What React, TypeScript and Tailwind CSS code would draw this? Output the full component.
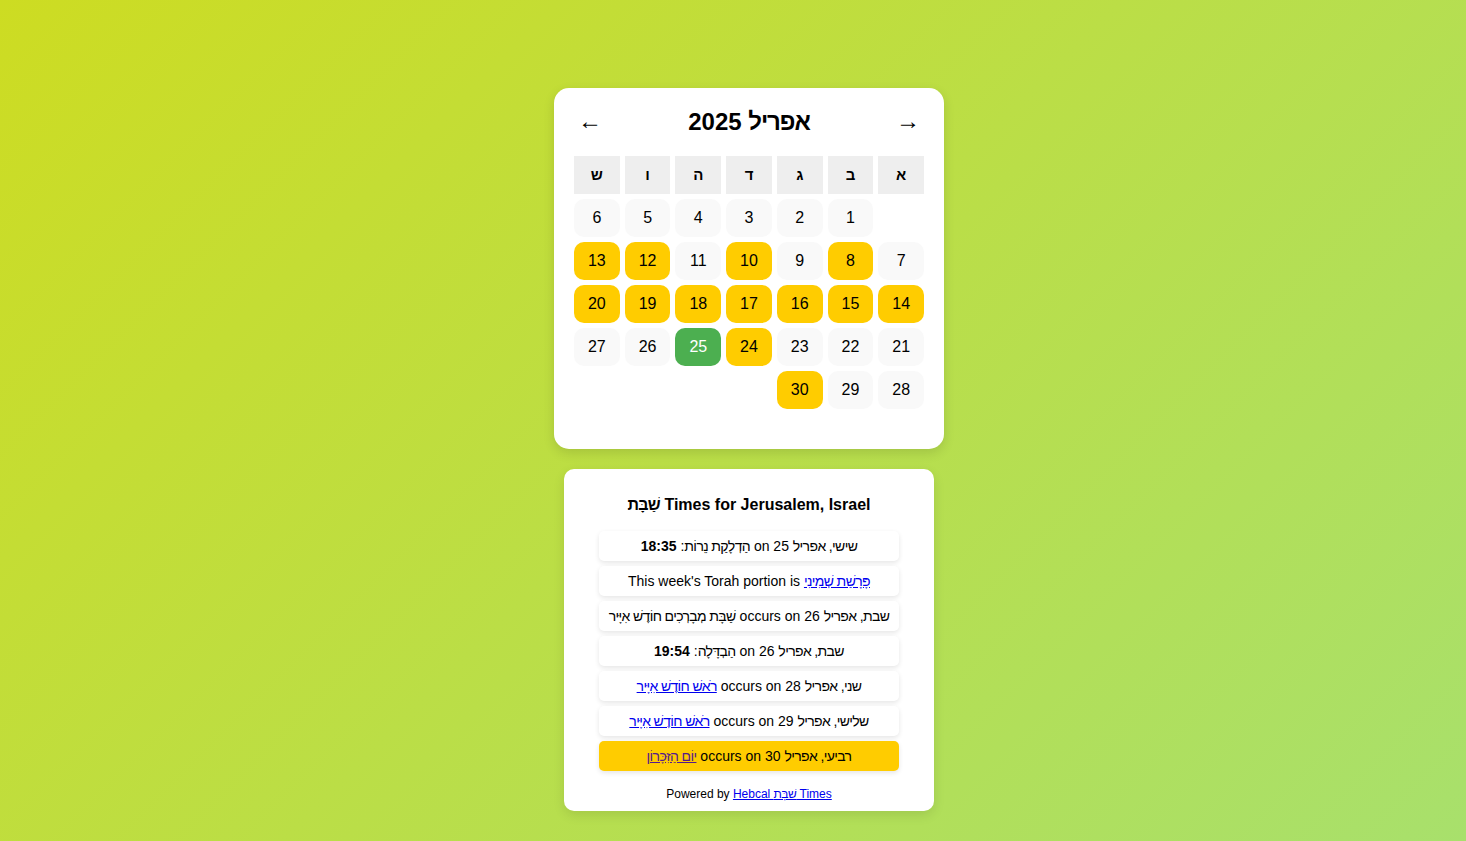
import React from 'react';

type Day = { n: number; kind?: 'event' | 'today' } | null;

// weeks are listed Sunday → Saturday, grid is rtl so Sunday sits on the right
const weeks: Day[][] = [
    [null, { n: 1 }, { n: 2 }, { n: 3 }, { n: 4 }, { n: 5 }, { n: 6 }],
    [{ n: 7 }, { n: 8, kind: 'event' }, { n: 9 }, { n: 10, kind: 'event' }, { n: 11 }, { n: 12, kind: 'event' }, { n: 13, kind: 'event' }],
    [{ n: 14, kind: 'event' }, { n: 15, kind: 'event' }, { n: 16, kind: 'event' }, { n: 17, kind: 'event' }, { n: 18, kind: 'event' }, { n: 19, kind: 'event' }, { n: 20, kind: 'event' }],
    [{ n: 21 }, { n: 22 }, { n: 23 }, { n: 24, kind: 'event' }, { n: 25, kind: 'today' }, { n: 26 }, { n: 27 }],
    [{ n: 28 }, { n: 29 }, { n: 30, kind: 'event' }, null, null, null, null],
];

const dayNames = ['א', 'ב', 'ג', 'ד', 'ה', 'ו', 'ש'];

const He = ({ children }: { children: React.ReactNode }) => (
    <span className="tracking-[-0.045em]">{children}</span>
);

const Calendar = () => (
    <div className="w-[390px] rounded-[15px] bg-white p-5 shadow-[0_4px_12px_rgba(0,0,0,0.12)]">
        <div className="mb-5 flex h-7 items-center justify-between">
            <button className="pl-[4px] pr-[6px] pb-[3px] text-[24px] leading-none text-black">←</button>
            <h2 className="text-[24px] font-bold leading-7 text-black" dir="rtl">
                <He>אפריל</He> 2025
            </h2>
            <button className="pl-[6px] pr-[4px] pb-[3px] text-[24px] leading-none text-black">→</button>
        </div>

        <div className="mb-5 grid grid-cols-7 gap-[5px]" dir="rtl">
            {dayNames.map((d) => (
                <div key={d} className="flex h-[38px] items-center justify-center bg-[#eeeeee] text-[15px] font-bold text-black">
                    {d}
                </div>
            ))}
            {weeks.flat().map((day, i) =>
                day === null ? (
                    <div key={i} className="h-[38px]" />
                ) : (
                    <div
                        key={i}
                        className={
                            day.kind === 'today'
                                ? 'flex h-[38px] items-center justify-center rounded-[10px] bg-[#4caf50] text-[16px] text-white'
                                : day.kind === 'event'
                                ? 'flex h-[38px] items-center justify-center rounded-[10px] bg-[#ffcc00] text-[16px] text-black'
                                : 'flex h-[38px] items-center justify-center rounded-[10px] bg-[#f9f9f9] text-[16px] text-black'
                        }
                    >
                        {day.n}
                    </div>
                )
            )}
        </div>
    </div>
);

const linkCls = 'text-[#0000ee] underline';
const itemCls = 'h-[30px] rounded-[5px] bg-white text-center text-[14px] leading-[30px] shadow-[0_2px_5px_rgba(0,0,0,0.1)]';

const ShabbatTimes = () => (
    <div className="mt-5 w-[370px] rounded-[10px] bg-white px-[35px] pt-5 pb-[9px] shadow-[0_4px_12px_rgba(0,0,0,0.1)]">
        <h3 className="mb-4 mt-[6px] text-center text-[16px] font-bold leading-5 text-black">
            <He>שַׁבָּת</He> Times for Jerusalem, Israel
        </h3>

        <ul className="flex flex-col gap-[5px]">
            <li dir="rtl" className={itemCls}>
                <He>שישי, אפריל</He> 25 on <He>הַדְלָקַת נֵרוֹת</He>: <b>18:35</b>
            </li>
            <li dir="ltr" className={itemCls}>
                This week's Torah portion is <a className={linkCls} href="#"><He>פָּרָשַׁת שְׁמִינִי</He></a>
            </li>
            <li dir="rtl" className={itemCls}>
                <He>שבת, אפריל</He> 26 occurs on <He>שַׁבָּת מְבָרְכִים חוֹדֶשׁ אִיָּיר</He>
            </li>
            <li dir="rtl" className={itemCls}>
                <He>שבת, אפריל</He> 26 on <He>הַבְדָּלָה</He>: <b>19:54</b>
            </li>
            <li dir="rtl" className={itemCls}>
                <He>שני, אפריל</He> 28 occurs on <a className={linkCls} href="#"><He>רֹאשׁ חוֹדֶשׁ אִיָּיר</He></a>
            </li>
            <li dir="rtl" className={itemCls}>
                <He>שלישי, אפריל</He> 29 occurs on <a className={linkCls} href="#"><He>רֹאשׁ חוֹדֶשׁ אִיָּיר</He></a>
            </li>
            <li dir="rtl" className={itemCls.replace('bg-white', 'bg-[#ffcc00]')}>
                <He>רביעי, אפריל</He> 30 occurs on <a className="text-[#551a8b] underline" href="#"><He>יוֹם הַזִּכָּרוֹן</He></a>
            </li>
        </ul>

        <p className="mt-[15px] text-center text-[12px] leading-4 text-black">
            Powered by <a className={linkCls} href="#">Hebcal <He>שַׁבָּת</He> Times</a>
        </p>
    </div>
);

export default function App() {
    return (
        <div className="flex min-h-screen flex-col items-center bg-[linear-gradient(135deg,#cddc22,#a8e06c)] pt-[88px] pb-[30px] pl-8 font-['Liberation_Sans',Arial,sans-serif] text-black">
            <Calendar />
            <ShabbatTimes />
        </div>
    );
}
